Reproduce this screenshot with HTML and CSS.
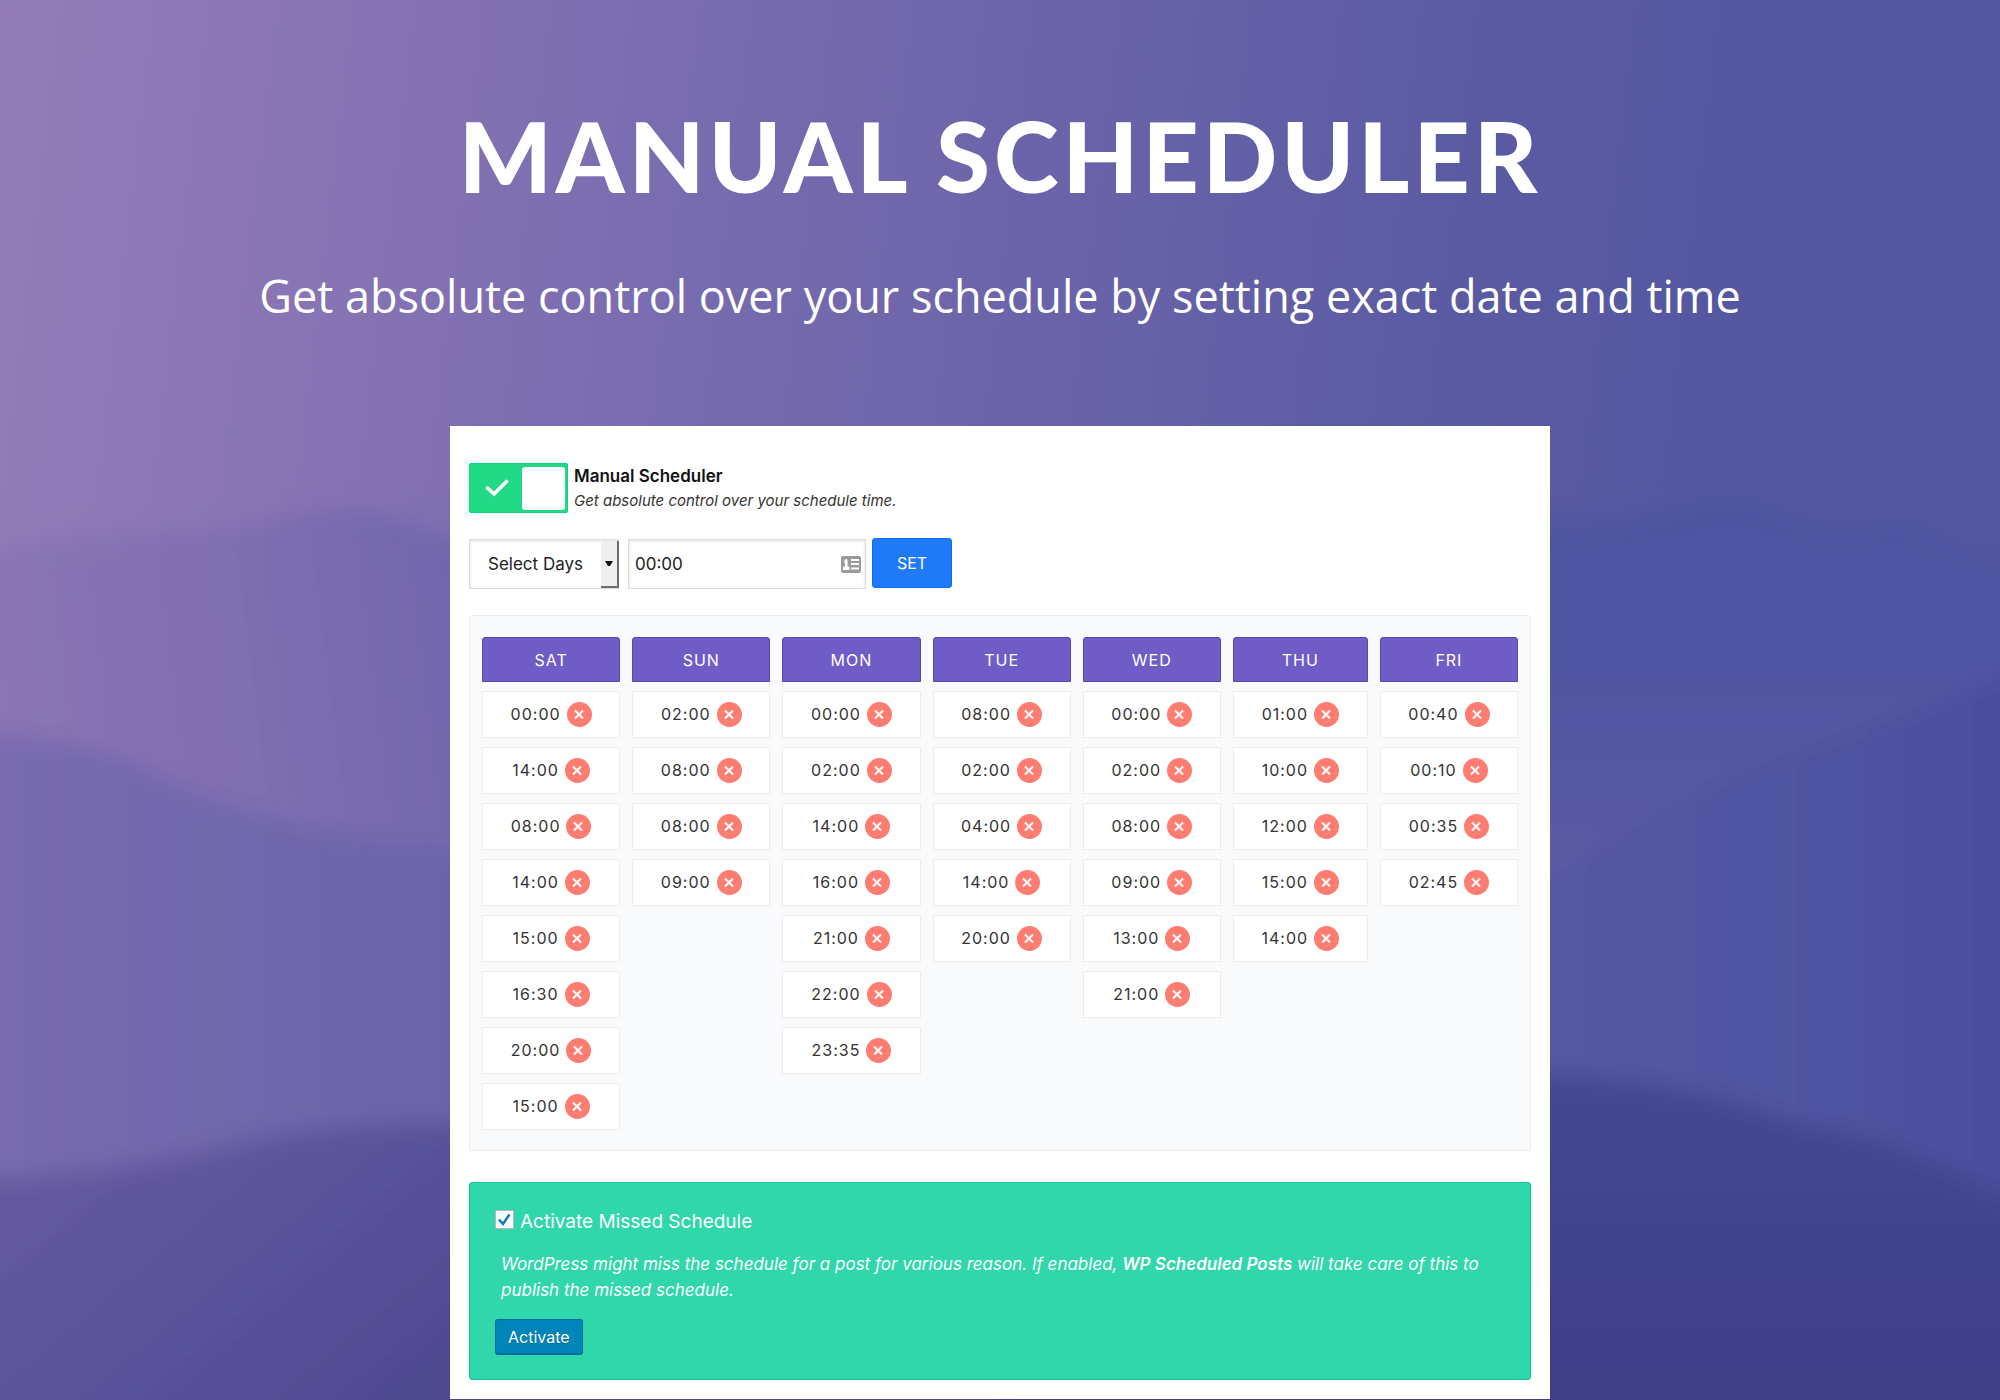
FILE: index.html
```html
<!DOCTYPE html>
<html lang="en">
<head>
<meta charset="utf-8">
<title>Manual Scheduler</title>
<link rel="stylesheet" href="styles.css">
</head>
<body>
<svg class="backdrop" viewBox="0 0 2000 1400" preserveAspectRatio="none" aria-hidden="true">
  <defs>
    <linearGradient id="sky" gradientUnits="userSpaceOnUse" x1="0" y1="50" x2="1700" y2="250">
      <stop offset="0" stop-color="#937cb8"/>
      <stop offset="0.1" stop-color="#8e78b6"/>
      <stop offset="0.35" stop-color="#7c6eb1"/>
      <stop offset="0.6" stop-color="#6c64aa"/>
      <stop offset="0.85" stop-color="#5b5ba3"/>
      <stop offset="1" stop-color="#5558a1"/>
    </linearGradient>
    <linearGradient id="farLeft" gradientUnits="userSpaceOnUse" x1="0" y1="700" x2="480" y2="640">
      <stop offset="0" stop-color="#8b75b4"/>
      <stop offset="0.5" stop-color="#7f6fb1"/>
      <stop offset="1" stop-color="#7065ac"/>
    </linearGradient>
    <linearGradient id="farRight" x1="0" y1="0" x2="0" y2="1">
      <stop offset="0" stop-color="#4e54a0"/>
      <stop offset="0.18" stop-color="#5055a1"/>
      <stop offset="0.4" stop-color="#5c5ba4"/>
      <stop offset="1" stop-color="#5c5ba4"/>
    </linearGradient>
    <linearGradient id="midLeft" x1="0" y1="0" x2="1" y2="0">
      <stop offset="0" stop-color="#796bb0"/>
      <stop offset="0.5" stop-color="#7167ac"/>
      <stop offset="1" stop-color="#6a64aa"/>
    </linearGradient>
    <linearGradient id="midRight" x1="0" y1="0" x2="1" y2="0">
      <stop offset="0" stop-color="#5759a3"/>
      <stop offset="0.5" stop-color="#4f54a0"/>
      <stop offset="1" stop-color="#4a4c9a"/>
    </linearGradient>
    <linearGradient id="nearLeft" gradientUnits="userSpaceOnUse" x1="100" y1="1130" x2="360" y2="1440">
      <stop offset="0" stop-color="#64599f"/>
      <stop offset="0.5" stop-color="#5a539b"/>
      <stop offset="1" stop-color="#4f4890"/>
    </linearGradient>
    <linearGradient id="nearRight" x1="0" y1="0" x2="0" y2="1">
      <stop offset="0" stop-color="#444892"/>
      <stop offset="0.6" stop-color="#40418b"/>
      <stop offset="1" stop-color="#403f88"/>
    </linearGradient>
    <filter id="haze" x="-10%" y="-10%" width="120%" height="120%"><feGaussianBlur stdDeviation="11"/></filter>
  </defs>
  <rect width="2000" height="1400" fill="url(#sky)"/>
  <g filter="url(#haze)">
    <path fill="url(#farLeft)" d="M-60 560C60 530 160 535 240 528C290 515 330 505 370 512C410 520 440 535 500 550L800 560V1460H-60Z"/>
    <path fill="url(#farRight)" d="M800 520H1550C1640 530 1680 495 1730 495C1790 500 1810 528 1850 525C1890 510 1910 515 1940 530C1970 545 2000 550 2060 550V1460H800Z"/>
    <path fill="url(#midLeft)" d="M-60 728C60 740 110 748 150 770C220 810 330 835 500 860V1460H-60Z"/>
    <path fill="url(#midRight)" d="M1500 900C1620 840 1700 780 1800 750C1900 730 1960 680 2060 660V1460H1500Z"/>
    <path fill="url(#nearLeft)" d="M-60 1182C80 1175 160 1165 250 1140C320 1125 380 1120 500 1122L1000 1110V1460H-60Z"/>
    <path fill="url(#nearRight)" d="M1000 1072H1550C1660 1080 1740 1100 1800 1125C1890 1135 1950 1175 2060 1220V1460H1000Z"/>
  </g>
</svg>
<main class="page">
  <header class="hero">
    <h1 class="hero-title">MANUAL SCHEDULER</h1>
    <p class="hero-text">Get absolute control over your schedule by setting exact date and time</p>
  </header>
  <section class="panel">
    <label class="switch-row">
      <input class="switch-input" type="checkbox" checked>
      <span class="switch">
        <svg class="switch-check" viewBox="0 0 24 20" aria-hidden="true"><path d="M2.500 10L9 16L21.500 3.500" fill="none" stroke="#fff" stroke-width="3.600" stroke-linecap="round"/></svg>
        <span class="switch-knob"></span>
      </span>
      <span class="switch-label">
        <strong class="switch-title">Manual Scheduler</strong>
        <em class="switch-hint">Get absolute control over your schedule time.</em>
      </span>
    </label>
    <form class="add-form">
      <div class="select-box">
        <select class="day-select" aria-label="Day"><option>Select Days</option></select>
        <span class="select-arrow"><svg viewBox="0 0 8 6" width="8" height="6" aria-hidden="true"><path d="M0 0H8L5 5H3Z" fill="#111"/></svg></span>
      </div>
      <div class="time-box">
        <input class="time-input" type="text" value="00:00" aria-label="Time">
        <svg class="card-icon" viewBox="0 0 20 17" aria-hidden="true">
          <rect width="20" height="17" rx="2" fill="#9b9b9b"/>
          <path fill="#fff" d="M2 14V11L4 10V8C3 7 3 3 5 3S7 7 6.500 8V10L8.500 11V14ZM10 3H18V5H10ZM10 7H18V9H10ZM10 11.500H18V13.500H10Z"/>
        </svg>
      </div>
      <button class="set-button" type="button">SET</button>
    </form>
    <div class="schedule">
      <table class="schedule-table">
        <colgroup><col span="5"><col class="narrow-col"><col></colgroup>
        <thead><tr><th>SAT</th><th>SUN</th><th>MON</th><th>TUE</th><th>WED</th><th>THU</th><th>FRI</th></tr></thead>
        <tbody id="slots"></tbody>
      </table>
    </div>
    <form class="missed">
      <label class="missed-label"><input class="missed-check" type="checkbox" checked>Activate Missed Schedule</label>
      <p class="missed-text">WordPress might miss the schedule for a post for various reason. If enabled, <strong>WP Scheduled Posts</strong> will take care of this to publish the missed schedule.</p>
      <button class="activate-button" type="button">Activate</button>
    </form>
  </section>
</main>
<script src="schedule.js"></script>
</body>
</html>
```
FILE: styles.css
```css
* { box-sizing: border-box; }

body {
  margin: 0;
  background: #6358a3;
  color: #222;
  font-family: Inter, "Liberation Sans", sans-serif;
}

.backdrop {
  position: absolute;
  inset: 0;
  z-index: -1;
  width: 100%;
  height: 100%;
}

.page {
  display: flex;
  flex-direction: column;
  align-items: center;
  padding-bottom: 1px;
}

.hero {
  padding-top: 97px;
  color: #fff;
  text-align: center;
}

.hero-title {
  margin: 0;
  font: 900 98px/116px Lato, sans-serif;
  letter-spacing: 4px;
}

.hero-text {
  margin: 51px 0 0;
  font: 400 45px/64px "Open Sans", sans-serif;
}

.panel {
  display: flex;
  flex-direction: column;
  width: 55%;
  margin-top: 98px;
  padding: 37px 19px 19px;
  background: #fff;
}

.switch-row {
  display: flex;
  align-items: center;
  gap: 6px;
}

.switch-input {
  position: absolute;
  opacity: 0;
}

.switch {
  display: flex;
  align-items: center;
  justify-content: space-between;
  width: 99px;
  height: 50px;
  padding: 0 2px 0 15px;
  border: 1px solid #07d57a;
  border-radius: 2px;
  background: #22da86;
}

.switch-check { width: 24px; height: 20px; }

.switch-knob {
  width: 43px;
  height: 43px;
  border-radius: 3px;
  background: #fff;
}

.switch-label {
  display: flex;
  flex-direction: column;
}

.switch-title {
  font-size: 17px;
  font-weight: 600;
  line-height: 25px;
  color: #111;
}

.switch-hint {
  font-size: 15px;
  line-height: 24px;
  color: #333;
}

.add-form {
  display: flex;
  gap: 6px;
  margin-top: 25px;
}

.select-box {
  position: relative;
  width: 150px;
  height: 50px;
  margin: 1px 3px 0 0;
}

.day-select,
.time-input {
  width: 100%;
  height: 50px;
  border: 1px solid #ddd;
  border-radius: 0;
  background: #fff;
  box-shadow: inset 0 1px 3px #0002;
  color: #222;
  font: 17px/24px Inter, sans-serif;
}

.day-select {
  appearance: none;
  padding: 0 18px;
}

.select-arrow {
  position: absolute;
  top: 2px;
  right: 0;
  bottom: 1px;
  display: flex;
  align-items: center;
  justify-content: center;
  width: 18px;
  border: solid #6e6e6e;
  border-width: 0 2px 2px 0;
  background: #eef0f0;
  pointer-events: none;
}

.time-box {
  position: relative;
  width: 238px;
  margin-top: 1px;
}

.time-input { padding: 0 6px; }

.card-icon {
  position: absolute;
  top: 17px;
  right: 5px;
  width: 20px;
  height: 17px;
}

.set-button {
  width: 80px;
  height: 50px;
  padding: 0;
  border: 1px solid #0d6efd;
  border-radius: 3px;
  background: #2079f6;
  color: #fff;
  font: 16px/24px Inter, sans-serif;
}

.schedule {
  margin-top: 26px;
  padding: 12px 0 11px;
  border: 1px solid #ebeced;
  border-radius: 3px;
  background: #f9fafc;
}

.schedule-table {
  width: 100%;
  border-collapse: separate;
  border-spacing: 12px 9px;
  table-layout: fixed;
  empty-cells: hide;
  font-size: 16px;
  line-height: 24px;
  letter-spacing: 1px;
}

.narrow-col { width: 14%; }

.schedule-table th {
  height: 45px;
  padding: 0;
  border: 1px solid #5c44b5;
  border-radius: 3px 3px 0 0;
  background: #705cc6;
  color: #fff;
  font-weight: 400;
}

.schedule-table td {
  height: 47px;
  padding: 0 0 1px;
  border: 1px solid #ebeced;
  background: #fff;
  color: #333;
}

.slot {
  display: flex;
  align-items: center;
  justify-content: center;
  gap: 6px;
}

.remove {
  display: flex;
  width: 25px;
  height: 25px;
  padding: 0;
  border: 0;
  border-radius: 50%;
  background: #ff7c70;
}

.missed {
  margin-top: 31px;
  padding: 24px 25px;
  border: 1px solid #16c392;
  border-radius: 3px;
  background: #30d7ab;
  color: #fff;
}

.missed-label {
  display: flex;
  align-items: center;
  gap: 6px;
  font-size: 19px;
  line-height: 30px;
}

.missed-check {
  appearance: none;
  width: 19px;
  height: 19px;
  margin: 0 0 5px;
  border: 1px solid #b4b9be;
  background: #fff url("data:image/svg+xml,%3Csvg xmlns='http://www.w3.org/2000/svg' viewBox='0 0 17 17'%3E%3Cpath d='M3 8.500L7 13L13.500 3.500' fill='none' stroke='%230d7fb8' stroke-width='2.600'/%3E%3C/svg%3E");
}

.missed-text {
  margin: 14px 6px 16px;
  font-size: 17px;
  font-style: italic;
  line-height: 26px;
}

.missed-text strong { font-weight: 600; }

.activate-button {
  display: block;
  height: 36px;
  padding: 0 12px;
  border: 1px solid #0069a3;
  border-bottom-width: 2px;
  border-radius: 3px;
  background: #0085ba;
  color: #fff;
  font: 16px/24px Inter, sans-serif;
  text-shadow: 0 1px 1px #006799;
}
```
FILE: schedule.js
```js
const days = [
  ["00:00", "14:00", "08:00", "14:00", "15:00", "16:30", "20:00", "15:00"],
  ["02:00", "08:00", "08:00", "09:00"],
  ["00:00", "02:00", "14:00", "16:00", "21:00", "22:00", "23:35"],
  ["08:00", "02:00", "04:00", "14:00", "20:00"],
  ["00:00", "02:00", "08:00", "09:00", "13:00", "21:00"],
  ["01:00", "10:00", "12:00", "15:00", "14:00"],
  ["00:40", "00:10", "00:35", "02:45"]
];
const cross = '<svg viewBox="0 0 25 25" width="25" height="25" aria-hidden="true"><path d="M8 8.500L16 16.500M16 8.500L8 16.500" fill="none" stroke="#fff" stroke-width="2"/></svg>';
const body = document.getElementById("slots");
const rows = Math.max(...days.map(d => d.length));
for (let r = 0; r < rows; r++) {
  const tr = body.insertRow();
  for (const day of days) {
    const td = tr.insertCell();
    if (day[r]) td.innerHTML = `<div class="slot"><span>${day[r]}</span><button class="remove" type="button" aria-label="Remove ${day[r]}">${cross}</button></div>`;
  }
}
```
